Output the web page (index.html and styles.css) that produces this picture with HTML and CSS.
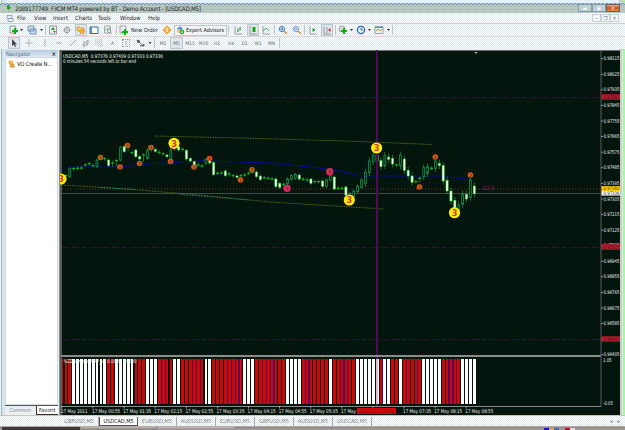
FILE: index.html
```html
<!DOCTYPE html>
<html lang="en">
<head>
<meta charset="utf-8">
<title>FXCM MT4 - USDCAD,M5</title>
<link rel="stylesheet" href="styles.css">
</head>
<body>
<div class="window">
  <header class="titlebar">
    <svg class="app" viewBox="0 0 6 9"><path d="M1 1h3l-1 2h2L2 8l1-3H1z" fill="#16a51c"/></svg>
    <svg class="title" viewBox="0 0 190 10"><text x="0" y="7.6" textLength="186">2089177749: FXCM MT4 powered by BT - Demo Account - [USDCAD,M5]</text></svg>
    <div class="controls"><span class="ctl">▬</span><span class="ctl">▣</span><span class="ctl close">✕</span></div>
  </header>
  <nav class="menu">
    <svg viewBox="0 0 8 9"><path d="M1 1.5h5v3H1zM2 4.5h5v3H2z" fill="#e8f1f8" stroke="#7d9bb5" stroke-width=".8"/></svg>
    <span>File</span><span>View</span><span>Insert</span><span>Charts</span><span>Tools</span><span>Window</span><span>Help</span>
    <div class="child"><span>–</span><span>❐</span><span>✕</span></div>
  </nav>
  <div class="bar bar1">
    <svg class="i"><path d="M1 1h5l1 2v5H1z" fill="#eee" stroke="#777" stroke-width=".7"/><path d="M5 3h2v2h2v2H7v2H5V7H3V5h2z" fill="#12ae16"/></svg><b class="dd"></b>
    <svg class="i"><path d="M1 1h6v5H1zM3 4h6v5H3z" fill="#cfe2f2" stroke="#587ca0" stroke-width=".8"/></svg><b class="dd"></b><b class="sep"></b>
    <svg class="i"><path d="M1.5 1h7v8h-7z" fill="#eee" stroke="#788" stroke-width=".8"/><path d="M3 5l2-3 2 3z" fill="#1a9c26"/><path d="M5 6l3 0-1.5 2z" fill="#c33"/></svg>
    <svg class="i"><circle cx="5" cy="5" r="2.7" fill="none" stroke="#999"/><path d="M5 1v8M1 5h8" stroke="#999" stroke-width=".7"/></svg>
    <svg class="i on"><path d="M1 2h3l1 1h3v3H1z" fill="#f4c860" stroke="#c58e34" stroke-width=".6"/><path d="M6 4l1 1.6 2 .2-1.500 1.200.5 2L6 8l-2 1 .5-2L3 5.800l2-.2z" fill="#ffb52d" stroke="#d77722" stroke-width=".5"/></svg>
    <svg class="i"><path d="M1 2h8v6.500H1z" fill="#fff" stroke="#3471ad"/><path d="M2 2v6" stroke="#3471ad" stroke-width="1.500"/></svg>
    <svg class="i"><path d="M1.500 1h6v7h-6z" fill="#eee" stroke="#999" stroke-width=".8"/><path d="M2 6l2-3 1 2 2-3" fill="none" stroke="#4b7" stroke-width=".7"/><circle cx="6" cy="6" r="1.700" fill="#cfe0ea" stroke="#789" stroke-width=".6"/><path d="M7 7l2 2" stroke="#789"/></svg><b class="sep"></b>
    <svg class="i"><path d="M1 1h6v7H1z" fill="#e7eef4" stroke="#788" stroke-width=".7"/><path d="M5 4h2v2h2v2H7v2H5V8H3V6h2z" fill="#12ae16"/></svg>
    <svg class="lbl w30" viewBox="0 0 30 10"><text x="1" y="7" textLength="27">New Order</text></svg>
    <svg class="i"><path d="M5 .8L9.200 5 5 9.200.8 5z" fill="#f2b341" stroke="#cf8724" stroke-width=".6"/><path d="M5 3v4" stroke="#fff"/></svg>
    <div class="expert"><svg class="i"><path d="M2 4Q5-1 8 4L6 5H3z" fill="#4f8fc8"/><circle cx="4" cy="6" r="2" fill="#f0c080"/><circle cx="7" cy="7" r="2.300" fill="#26a52b"/><path d="M6.300 6v2.200l2-1.100z" fill="#fff"/></svg><svg class="lbl w40" viewBox="0 0 40 10"><text x="1" y="7" textLength="38">Expert Advisors</text></svg></div><b class="sep"></b>
    <svg class="i"><path d="M2 1v8h7" fill="none" stroke="#888" stroke-width=".8"/><path d="M5 3v4M7 2v4M5 6h-1M7 3h1" stroke="#239532" stroke-width=".9"/></svg>
    <svg class="i on"><path d="M2 1v8h7" fill="none" stroke="#888" stroke-width=".8"/><path d="M4.500 2h3v5h-3z" fill="#16a51c"/></svg>
    <svg class="i"><path d="M2 1v8h7" fill="none" stroke="#888" stroke-width=".8"/><path d="M2 6q3-5 6 0" fill="none" stroke="#2c9c37" stroke-width=".8"/></svg><b class="sep"></b>
    <svg class="i"><circle cx="4" cy="4" r="2.700" fill="#dceafa" stroke="#4d86c4"/><path d="M6 6l3 3" stroke="#d09b3e" stroke-width="1.600"/><path d="M2.500 4h3M4 2.500v3" stroke="#2a62a5" stroke-width=".8"/></svg>
    <svg class="i"><circle cx="4" cy="4" r="2.700" fill="#dceafa" stroke="#7ea6cc"/><path d="M6 6l3 3" stroke="#d09b3e" stroke-width="1.600"/><path d="M2.500 4h3" stroke="#2a62a5" stroke-width=".8"/></svg><b class="sep"></b>
    <svg class="i"><path d="M2 1v8h7" fill="none" stroke="#888" stroke-width=".8"/><path d="M4.500 3v4l3-2z" fill="#16a51c"/></svg>
    <svg class="i on"><path d="M2 1v8h7M5 2v6" fill="none" stroke="#888" stroke-width=".8"/><path d="M8.500 3v4L6 5z" fill="#d32a2a"/></svg><b class="sep"></b>
    <svg class="i"><circle cx="4" cy="4" r="3" fill="#ddd" stroke="#888" stroke-width=".7"/><path d="M5 3h2v2h2v2H7v2H5V7H3V5h2z" fill="#12ae16"/></svg><b class="dd"></b>
    <svg class="i"><circle cx="5" cy="5" r="3.600" fill="#e8f2fc" stroke="#2b68b4" stroke-width="1.300"/><path d="M5 3v2h2" fill="none" stroke="#234" stroke-width=".7"/></svg><b class="dd"></b>
    <svg class="i"><path d="M1 1.500h8v7H1z" fill="#e6f0e5" stroke="#7392ad" stroke-width=".8"/><path d="M1 2.500h8" stroke="#5d8ebc"/><path d="M2 6l2-2 2 2 2-2" fill="none" stroke="#b58b2c" stroke-width=".8"/></svg><b class="dd"></b><b class="sep"></b>
  </div>
  <div class="bar bar2">
    <svg class="i on"><path d="M3 1v7l1.600-1.500L6 9l1-.5-1-2.300h2z" fill="#444"/></svg>
    <svg class="i"><path d="M5 1v8M1 5h8" stroke="#aaa" stroke-width=".8"/></svg>
    <svg class="i"><path d="M5 1v8" stroke="#999" stroke-width=".8"/></svg>
    <svg class="i"><path d="M2 5h6" stroke="#999" stroke-width=".8"/></svg>
    <svg class="i"><path d="M2 8l6-6" stroke="#888" stroke-width=".8"/></svg>
    <svg class="i"><path d="M1 7l7-5M2 9l7-5M3 3v6M6 2v6" stroke="#999" stroke-width=".8"/></svg>
    <svg class="i"><path d="M1 2h8M1 4h8M1 6h8M4 8h5" stroke="#aaa" stroke-width=".8" stroke-dasharray="1.500 .5"/></svg>
    <span>A</span><span class="tbox">T</span>
    <svg class="i"><path d="M2 2l3 1-2 2zM4 4l4 4M5 8h4V6" fill="#555" stroke="#555" stroke-width=".8"/></svg><b class="dd"></b><b class="sep"></b>
    <span>M1</span><span class="on">M5</span><span>M15</span><span>M30</span><span>H1</span><span>H4</span><span>D1</span><span>W1</span><span>MN</span><b class="sep"></b>
  </div>
  <main class="work">
    <aside class="nav">
      <div class="navhead"><span>Navigator</span><b>×</b></div>
      <div class="navbody"><div class="item"><svg viewBox="0 0 8 8"><path d="M1 1h3l1 1v2H1z" fill="#f1bd55" stroke="#ce8a38" stroke-width=".5"/><path d="M2 4h5L5 6h2v1.500H2z" fill="#e29a3a"/></svg><svg class="itxt" viewBox="0 0 38 9"><text x="1" y="6.500" textLength="35">VO Create N...</text></svg></div></div>
      <div class="navtabs"><span>Common</span><span class="cur">Favorit</span></div>
    </aside>
    <svg class="chart" id="chart" viewBox="60 50 560 365"></svg>
    <div class="edge"></div>
  </main>
  <footer class="tabs"><span>GBPUSD,M5</span><span class="cur">USDCAD,M5</span><span>EURUSD,M5</span><span>AUDUSD,M5</span><span>EURUSD,M5</span><span>GBPUSD,M5</span><span>AUDUSD,M5</span><span>USDCAD,M5</span><div class="arrows"><i>◂</i><i>▸</i></div></footer>
  <div class="taskbar"><b class="dark"></b><b class="lit"></b><b class="lit2"></b><b class="mid"></b><i class="c1"></i><i class="c2"></i><i class="c3"></i><i class="c4"></i><i class="c5"></i></div>
</div>
<script src="chart.js"></script>
</body>
</html>
```
FILE: styles.css
```css
* { box-sizing: border-box; }
body { margin: 0; width: 625px; height: 430px; overflow: hidden; background: #fff; font-family: "DejaVu Sans Condensed", "DejaVu Sans", sans-serif; font-size: 5.3px; color: #333; }
svg { display: block; flex: none; }
.window { display: flex; flex-direction: column; width: 625px; height: 430px; padding-top: 3px; background: linear-gradient(90deg, #edf3f8 0 1px, #a9bfc8 1px 2px, #d8e6ef 2px 6px, #e6f0f7 6px 619px, #c5d0cc 619px 623px, #a9efa3 623px); }
.titlebar, .menu, .bar, .work, .tabs { flex: none; }
.titlebar { height: 10px; display: flex; align-items: center; padding-left: 6px; padding-right: 5px; background: repeating-conic-gradient(#759cc0 0 25%, #b9c8c5 0 50%) 0 0 / 4px 2px repeat-x, linear-gradient(#a9bfc8, #b7c6be 35%); }
.titlebar .app { width: 6px; height: 9px; margin-right: 3px; }
.titlebar .title { width: 190px; height: 10px; }
.title text { font-size: 6.2px; fill: #15212b; }
.controls { margin-left: auto; display: flex; height: 8px; }
.ctl { width: 14px; height: 8px; border: 1px solid #839eaf; background: #bfd0d3; color: #f9ffff; text-align: center; font-size: 5px; line-height: 6px; }
.ctl.close { background: linear-gradient(#ddb091, #c55427 50%, #d99360); border-color: #745e5a; }
.menu { height: 11px; display: grid; grid-template-columns: 9px 17px 19px 22px 23px 22px 28px 30px 1fr; align-items: center; padding-left: 6px; padding-right: 6px; background: repeating-conic-gradient(#fff 0 25%, #e1edf5 0 50%) 0 0 / 2px 2px; border-bottom: 1px solid #dfc9c9; font-size: 5.8px; color: #222; white-space: nowrap; }
.menu svg { width: 8px; height: 9px; }
.menu > span { padding-left: 2px; }
.child { justify-self: end; display: flex; }
.child span { width: 9px; height: 8px; border: 1px solid #c6d4da; background: #f4f9fa; font-size: 5px; line-height: 6px; text-align: center; color: #567; }
.bar { display: grid; align-items: center; justify-items: center; padding-left: 8px; background: repeating-conic-gradient(#fcfdfe 0 25%, #e0ebf3 0 50%) 0 0 / 2px 2px; }
.bar1 { height: 13px; border-bottom: 1px solid #e0d5d4; justify-content: start; grid-template-columns: 11px 5px 15px 5px 2px 14px 14px 13px 14px 14px 2px 13px 30px 13px 54px 3px 16px 13px 14px 3px 14px 13px 3px 14px 13px 4px 12px 5px 13px 5px 14px 5px 3px; }
.bar2 { height: 12px; justify-content: start; grid-template-columns: 12px 17px 15px 14px 13px 13px 14px 13px 14px 14px 6px 3px 14px 13px 14px 13px 14px 14px 13px 14px 13px 2px; color: #666; font-size: 4.9px; }
.i { width: 10px; height: 10px; overflow: hidden; }
.on { background: #dce6eb; box-shadow: 0 0 0 1px #bdc8ce; }
.dd { width: 3px; height: 2px; background: #333; clip-path: polygon(0 0, 100% 0, 50% 100%); }
.sep { width: 1px; height: 10px; background: #bfc6c9; }
.lbl { height: 10px; }
.lbl text { font-size: 5.6px; fill: #222; }
.w30 { width: 30px; }
.w40 { width: 40px; }
.expert { display: flex; align-items: center; width: 53px; height: 11px; border: 1px solid #c3c8ca; background: #f2f5f7; }
.bar2 span.on { padding: 2px 2px; }
.tbox { border: 1px dotted #999; padding: 0 2px; }
.work { display: flex; height: 365px; margin-top: 1px; }
.nav { width: 60px; padding-left: 5px; padding-right: 1px; display: flex; flex-direction: column; border-right: 1px solid #8d8f8f; background: linear-gradient(90deg, #eef4f8 0 1px, #9eb4be 1px 2px, #d7e5ee 2px 5px, #e8f0f5 5px); }
.navhead { height: 7px; display: flex; justify-content: space-between; align-items: center; padding: 0 2px 0 1px; background: linear-gradient(#b9ccdc, #dce8f1); color: #54718b; font-size: 5.6px; }
.navhead b { font-size: 6px; color: #222; }
.navbody { flex: 1; background: #fff; border: 1px solid #d3dbe0; }
.item { display: flex; align-items: center; height: 11px; padding-left: 2px; }
.item svg { width: 8px; height: 8px; }
.item .itxt { width: 38px; height: 9px; }
.itxt text { font-size: 5.9px; fill: #222; }
.navtabs { height: 10px; display: flex; border-top: 1px solid #555; font-size: 5.4px; line-height: 8px; color: #888; }
.navtabs span { width: 31px; flex: none; text-align: center; }
.navtabs .cur { width: 22px; padding-left: 2px; text-align: left; background: #fff; border-left: 1px solid #333; border-bottom: 1px solid #333; color: #222; }
.chart { width: 560px; height: 365px; background: #03150c; }
.edge { width: 5px; background: linear-gradient(90deg, #c9cdcc 0 2px, #e3e8e8 2px 3px, #a6f5a0 3px); }
.tabs { height: 11px; display: flex; align-items: center; padding-left: 60px; padding-right: 5px; border-top: 1px solid #e7b7b0; background: repeating-conic-gradient(#fff 0 25%, #dfeaf1 0 50%) 0 0 / 2px 2px; color: #858585; font-size: 5.5px; }
.tabs span { width: 39px; height: 9px; line-height: 8px; text-align: center; border-right: 1px solid #aaa; }
.tabs .cur { background: #fff; color: #111; border: 1px solid #555; border-top: 0; }
.arrows { margin-left: auto; display: flex; gap: 5px; color: #888; }
.taskbar { flex: none; height: 4px; display: flex; align-items: flex-end; border-top: 1px solid #b7aaa4; background: linear-gradient(#8b8987, #a5a3a1); }
.taskbar b { height: 3px; }
.dark { width: 78px; margin-left: 2px; background: #3b3b3b; }
.lit { width: 75px; margin-left: 1px; background: linear-gradient(#bcb9b6, #817f7d); }
.lit2 { width: 76px; margin-left: 2px; background: linear-gradient(#c4c0bc, #8d8a88); }
.mid { width: 310px; }
.taskbar i { width: 5px; height: 2px; }
.c1 { background: #1717c8; }
.c2 { background: #e0a452; }
.c3 { background: #3876b5; margin-right: 6px; }
.c4 { background: #b01222; }
.c5 { background: #ddd; }
.crisp { shape-rendering: crispEdges; }
.ax { font-size: 5.2px; fill: #eceeec; }
.hd { font-size: 5.2px; fill: #f0f3f0; }
.three { font-size: 9px; font-weight: bold; fill: #c4403c; text-anchor: middle; }
.mini { font-size: 4px; font-weight: bold; fill: #5c3c08; text-anchor: middle; }
```
FILE: chart.js
```javascript
const svg = document.getElementById('chart');
const out = [];
const rect = (x, y, w, h, f, c = '') => out.push(`<rect x="${x}" y="${y}" width="${w}" height="${h}" fill="${f}" class="${c}"/>`);
const line = (pts, s, d, w = 1) => out.push(`<polyline points="${pts}" fill="none" stroke="${s}" stroke-width="${w}" stroke-dasharray="${d || 'none'}"/>`);
const text = (x, y, t, w, c = 'ax', f = '') => out.push(`<text x="${x}" y="${y}" class="${c}" ${w ? `textLength="${w}" lengthAdjust="spacingAndGlyphs"` : ''} ${f ? `style="fill:${f}"` : ''}>${t}</text>`);
const barX = i => 474.3 - 3.89 * (105 - i);

// Frame, price levels and trend lines
rect(60, 50, 560, 1, '#77736f');
rect(60, 50, 2, 365, '#5a5a5a');
line('62,97.5 601,97.5', '#441047', '5 2 1 2', .8);
line('62,247.5 601,247.5', '#441047', '5 2 1 2', .8);
line('62,339.5 601,339.5', '#441047', '5 2 1 2', .8);
line('62,189 601,189', '#4a2d18', '1 2', 1.4);
rect(62, 193, 539, 1, '#454a42');
line('155,136 240,138 345,141 432,144.5', '#56721c', '1.500 1', .9);
line('62,185 120,188.500 200,195 270,202 384,209', '#56721c', '1.500 1', .9);
line('100,187.500 135,189.500', '#2a7a61', '2 1', .8);
line('180,194.500 250,200', '#2a7a61', '2 1', .8);
line('68,167 115,167 150,164 205,160.500 235,162 270,163 310,167 340,171 360,176 440,176 474,180', '#0808d8', '1.500 1', 1.1);

// Candles: [top, bottom, kind] in thirds of a pixel below y=125; W down body, H up body, D doji
const candles = '150-163D 131-155H 129-134D 128-133D 127-132D 118-122D 114-119D 120-124D 105-125H 98-102D 99-104D 105-122W 112-122D 105-120D 68-105H 65-80W 62-75D 81-85D 75-95W 95-102W 88-108D 75-100H 69-76D 73-79W 80-84D 84-88D 90-95W 75-100H 65-74D 65-75W 71-75D 76-102W 100-108W 110-122W 118-122D 121-125D 103-115H 106-114W 113-149W 143-147D 142-146D 138-152W 145-151D 150-154D 153-157W 150-162D 148-152D 143-147D 139-144D 141-155W 153-164W 156-160D 158-162D 160-164D 162-185W 175-187W 176-180D 162-176H 152-163H 148-160H 150-162W 161-165D 163-167D 162-175W 168-172D 168-172D 168-184W 165-184H 150-165H 156-192W 188-192D 188-192D 186-210W 205-220H 198-215H 183-200H 165-187H 142-175H 108-143H 90-110H 90-108W 107-125W 92-122H 96-103W 100-117W 118-122D 90-122H 102-136W 136-153W 153-172W 168-172D 158-170D 128-155H 125-145H 128-132D 108-130H 115-122W 122-168W 166-198W 198-228W 226-248W 240-255H 207-238H 208-222W 165-217H 183-206W'.split(' ');
candles.forEach((c, i) => {
  const m = c.match(/(\d+)-(\d+)(.)/);
  const x = barX(i), y = 125 + m[1] / 3, h = (m[2] - m[1]) / 3;
  const wick = m[3] === 'D' ? 1.2 : i > 76 ? 3.5 : 1.5;
  rect(x - .35, y - wick, .7, h + wick * 2, '#159a35');
  if (m[3] === 'W') out.push(`<rect x="${x - 1.1}" y="${y}" width="2.200" height="${h}" fill="#efffec" stroke="#38d13a" stroke-width=".5"/>`);
  else if (m[3] === 'H') out.push(`<rect x="${x - .9}" y="${y}" width="1.800" height="${h}" fill="#03150c" stroke="#159652" stroke-width=".8"/>`);
  else rect(x - 1.4, y, 2.8, Math.min(h, 1.3), '#0ab51b');
});

// Oscillator bars: R red, W white, P red followed by a purple gap
const bars = [
  ['R', 2], ['W', 9], ['R', 2], ['W', 5], ['R', 3], ['W', 3], ['P', 2], ['R', 2], ['W', 2],
  ['R', 2], ['P', 3], ['R', 1], ['W', 2], ['R', 3], ['P', 4], ['R', 1], ['W', 3],
  ['R', 1], ['P', 4], ['R', 3], ['W', 4], ['P', 2], ['R', 5], ['W', 1],
  ['R', 1], ['P', 3], ['R', 2], ['W', 6], ['P', 1], ['W', 2], ['R', 2], ['W', 1], ['P', 1],
  ['R', 2], ['P', 1], ['R', 1], ['W', 5], ['R', 1], ['P', 3], ['R', 1], ['W', 4]
].map(([k, n]) => k.repeat(n)).join('');
rect(62, 359, 1, 45, '#cb0808', 'crisp');
[...bars].forEach((k, i) => {
  const x = barX(i);
  rect(x - 1.35, 359, 2.8, 45, k === 'W' ? '#fff' : '#cb0808', 'crisp');
  if (k === 'P') rect(x + 1.4, 359, 1.3, 45, '#54095a', 'crisp');
});

// Cursor line
rect(376, 50, 2, 309, '#500a59');
rect(376, 359, 2, 45, '#efb8c6');
rect(376, 404, 2, 3, '#500a59');

// Signals
[[100.5,157.5],[120,167],[127.5,145.5],[139.5,163.5],[151,147.5],[170.5,161.5],[194,167],[209.5,158.5],[240.5,180],[252,169.7],[419.5,187],[435.3,157],[470.5,175]].forEach(([x, y]) => {
  out.push(`<circle cx="${x}" cy="${y}" r="2.800" fill="#d9571b"/>`);
  text(x, y + 1.5, '2', 0, 'mini');
});
[[287,188.3],[329.7,171.7]].forEach(([x, y]) => {
  out.push(`<circle cx="${x}" cy="${y}" r="3.700" fill="#d42a67"/>`);
  text(x, y + 1.5, '2', 0, 'mini');
});
[[61,179],[174,143.3],[349.3,200],[376.6,148],[454.5,212.7]].forEach(([x, y]) => {
  out.push(`<circle cx="${x}" cy="${y}" r="5.600" fill="#fdec08"/>`);
  text(x, y + 3.3, '3', 0, 'three');
});
text(481, 189.5, '-117.4', 13, 'ax', '#a0108a');
out.push('<path d="M474 52h4l-2 2z" fill="#9aa4a8"/>');

// Separators and axes
rect(61, 355, 540, 2, '#8b8b8b');
rect(61, 406, 540, 1, '#8b8b8b');
rect(600.5, 51, 1, 356, '#625869');
for (let i = 0; i < 20; i++) {
  const y = 58.3 + i * 15.58;
  rect(601, y, 2, .8, '#aaa');
  if (i !== 18) text(603.5, y + 2, (0.98115 - i * .0009).toFixed(5), 16);
}
[[97,'0.97891'],[247,'0.97025'],[339,'0.96492']].forEach(([y, t]) => {
  rect(601.5, y - 2.7, 18.5, 5.4, '#b81c28');
  text(603.5, y + 1.9, t, 16, 'ax', '#4a0d34');
});
rect(601.5, 186, 18.5, 5, '#f1cd12');
text(603.5, 190.4, '0.97360', 16, 'ax', '#6a4b00');
rect(601.5, 191, 18.5, 4.6, '#f6f6f6');
text(603.5, 195.2, '0.97336', 16, 'ax', '#333');
text(603, 361.7, '1.05', 8.5);
text(603, 405.2, '-0.05', 10);
text(63, 57.8, 'USDCAD,M5&#160; 0.97376 0.97409 0.97333 0.97336', 100, 'hd');
text(63, 62.8, '0 minutes 54 seconds left to bar end', 73, 'hd');
text(63.5, 362.8, '%ZZSemafor NRP_v3 0.0000 1.0000', 73, 'hd');
['17 May 2011','17 May 00:55','17 May 01:35','17 May 02:15','17 May 02:55','17 May 03:35','17 May 04:15','17 May 04:55','17 May 05:35','17 May','','17 May 07:35','17 May 08:15','17 May 08:55'].forEach((t, i) => {
  rect(61.5 + i * 31.1, 406, .8, 2.5, '#aaa');
  if (t) text(61 + i * 31.1, 412.9, t, t === '17 May' ? 15 : i ? 28 : 26.5);
});
rect(357, 408, 39, 6, '#d90808');
text(359, 412.9, '2011.05.17 06:50', 35, 'ax', '#7a0808');
svg.innerHTML = out.join('');
```
